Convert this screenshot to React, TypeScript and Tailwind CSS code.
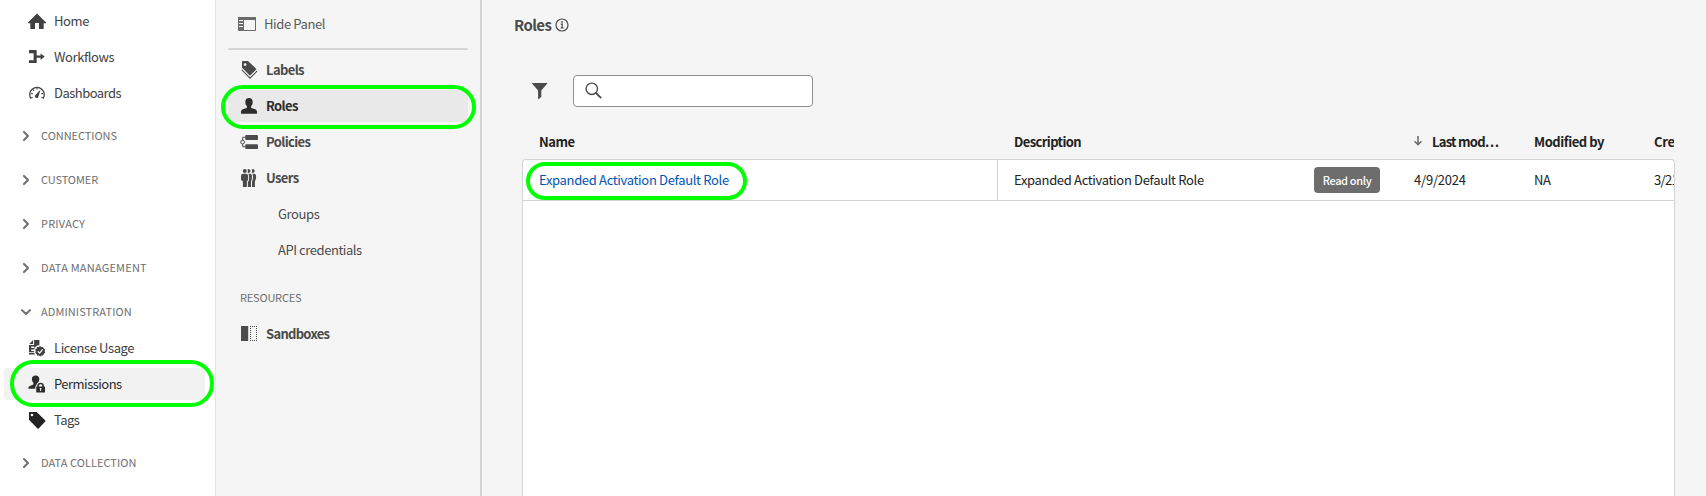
import type { ReactNode } from "react";

type IconProps = { children: ReactNode; className?: string };

function Icon({ children, className = "" }: IconProps) {
  return (
    <svg width="18" height="18" viewBox="0 0 18 18" fill="currentColor" className={`shrink-0 ${className}`}>
      {children}
    </svg>
  );
}

const HomeIcon = () => (
  <Icon>
    <path d="M9 1.6 17.8 10.2a.6.6 0 0 1-.4 1.1H15.7V16.4a.6.6 0 0 1-.6.6H11V11.4a.4.4 0 0 0-.4-.4H7.4a.4.4 0 0 0-.4.4V17H2.9a.6.6 0 0 1-.6-.6V11.3H.6a.6.6 0 0 1-.4-1.1Z" />
  </Icon>
);

const WorkflowsIcon = () => (
  <Icon>
    <path d="M1 2.2a.3.3 0 0 1 .3-.3H8a.7.7 0 0 1 .7.7V7.4H12.6V5.4L16.7 8.6 12.6 12V9.8H8.7v4.6a.7.7 0 0 1-.7.7H1.3a.3.3 0 0 1-.3-.3V12.2h4.6V5.2H1Z" />
  </Icon>
);

const DashboardsIcon = () => (
  <Icon>
    <path d="M2.9 14.7A7.3 7.3 0 1 1 15.1 14.7" fill="none" stroke="currentColor" strokeWidth="1.3" />
    <path d="M12.6 5.6 10.4 12.6a1.7 1.7 0 1 1-2.9-1.5Z" />
    <path d="M3.2 9.6h1.6M5 5.6l1.1 1M9 3.9v1.5M13.3 9.6h1.6M3.2 13.9l1.4-.7M14.8 13.9l-1.4-.7" fill="none" stroke="currentColor" strokeWidth="1.1" />
  </Icon>
);

const LicenseIcon = () => (
  <Icon>
    <path d="M1.3 4.9 5.1 1V4.9ZM6.1 1H11.4V6.1A6 6 0 0 0 7 8.6H6.1V5.9H6.1Z" />
    <path d="M1 5.9H7V7.6H3.2V8.9H6.8L6.2 10.4H3.2V11.9H6V13.2H1Z" />
    <path d="M1 14.1H6.3L6.8 15.4H1Z" />
    <path
      fillRule="evenodd"
      d="M12 7.1 13.4 8.1 15.1 8 15.7 9.6 17.1 10.5 16.7 12.1 17.2 13.8 15.8 14.8 15.2 16.4H13.5L12.2 17.5 10.8 16.5 9.1 16.4 8.6 14.9 7.2 13.8 7.7 12.2 7.2 10.5 8.6 9.6 9.1 8 10.8 8.1ZM11.7 14.9 15.1 10.8 14.2 10.1 11.6 13.3 10.2 11.9 9.4 12.7Z"
    />
  </Icon>
);

const PermissionsIcon = () => (
  <Icon>
    <path d="M7.6.6C10 .6 11.3 2 11.3 4.1 11.3 5.8 10.6 7 9.8 7.8 8.9 8.4 8.4 9.4 8.3 10.5 7.6 10.9 7.3 11.3 7.3 12V13.7H.4V12.7C.4 11.5 1.9 10.6 4.9 9.7c.4-.1.5-.4.5-.8V7.8C4.5 7 3.9 5.8 3.9 4.1 3.9 2 5.2.6 7.6.6Z" />
    <path
      fillRule="evenodd"
      d="M9.3 11.5V10.8C9.3 8.9 10.7 7.7 12.6 7.7S15.9 8.9 15.9 10.8V11.5H16.6a.4.4 0 0 1 .4.4V17.2a.4.4 0 0 1-.4.4H8.6a.4.4 0 0 1-.4-.4V11.9a.4.4 0 0 1 .4-.4ZM10.9 11.5h3.4V10.8C14.3 9.8 13.6 9.2 12.6 9.2S10.9 9.8 10.9 10.8ZM13.1 15.9V14.5A.9.9 0 1 0 12.1 14.5V15.9Z"
    />
  </Icon>
);

const TagIcon = () => (
  <Icon className="text-[#222]">
    <path
      fillRule="evenodd"
      d="M1 1.6A.6.6 0 0 1 1.6 1H8.7L17.3 9.5a.8.8 0 0 1 0 1.1L10.6 17.4a.8.8 0 0 1-1.1 0L1 8.8ZM4 5.3A1.3 1.3 0 1 0 4 2.7 1.3 1.3 0 0 0 4 5.3Z"
    />
  </Icon>
);

const LabelsIcon = () => (
  <Icon>
    <path
      fillRule="evenodd"
      d="M2 .6A.6.6 0 0 1 2.6 0H8L16.1 7.7a.6.6 0 0 1 0 .9L10.4 14.2a.6.6 0 0 1-.9 0L2 6.6ZM5.1 5A1.4 1.4 0 1 0 5.1 2.2 1.4 1.4 0 0 0 5.1 5Z"
    />
    <path d="M2.3 8.6V9.3L10 17.2 16.6 10.6V10" fill="none" stroke="currentColor" strokeWidth="1.1" />
  </Icon>
);

const UserIcon = () => (
  <Icon>
    <path d="M9 1C11.3 1 12.7 2.5 12.7 4.9 12.7 6.8 12 8.1 11.1 9.1V10.4c0 .5.2.8.7.9C15.2 12 17 13 17 14.7V16.4a.4.4 0 0 1-.4.4H1.4a.4.4 0 0 1-.4-.4V14.7C1 13 2.8 12 6.2 11.3c.5-.1.7-.4.7-.9V9.1C6 8.1 5.3 6.8 5.3 4.9 5.3 2.5 6.7 1 9 1Z" />
  </Icon>
);

const PoliciesIcon = () => (
  <Icon>
    <rect x="5.2" y="2" width="12.8" height="4.9" rx="1" />
    <rect x="5.2" y="11.2" width="12.8" height="4.9" rx="1" />
    <path d="M5.2 4.3H2.7V7.2M2.7 11V13.7H5.2" fill="none" stroke="currentColor" />
    <circle cx="2.6" cy="9.1" r="1.9" fill="none" stroke="currentColor" />
  </Icon>
);

const UsersIcon = () => (
  <Icon>
    <circle cx="4.8" cy="2" r="2" />
    <path d="M7.4 3.5A2.6 2.6 0 0 0 7.4.5 1.9 1.9 0 1 1 7.4 3.5ZM11.6 3.5A2.6 2.6 0 0 0 11.6.5 1.9 1.9 0 1 1 11.6 3.5Z" />
    <path d="M3 4.8H6.2A1.8 1.8 0 0 1 8 6.6V11.3L6.9 12.2V17.4a.5.5 0 0 1-.5.5H3.4a.5.5 0 0 1-.5-.5V12.2L1 11V6.8A2 2 0 0 1 3 4.8Z" />
    <path d="M8.2 4.8H10.2C11.3 5 12 6 12 7.2 12 9.4 11.8 10.8 11 12.2V17.4a.5.5 0 0 1-.5.5H7.9V12.8L8.9 11.8V6.6A2.8 2.8 0 0 0 8.2 4.8ZM12.2 4.8H14.2C15.4 5 16.1 6 16.1 7.2 16.1 9.4 15.8 10.8 14.9 12.2V17.4a.5.5 0 0 1-.5.5H12V12.8C12.8 11 13 9.2 13 7.2A3.6 3.6 0 0 0 12.2 4.8Z" />
  </Icon>
);

const SandboxesIcon = () => (
  <Icon>
    <rect x="1" y="1" width="7.2" height="15" />
    <path d="M10 1H11M12 1H13M14 1H15M16 1H17M10 15H11M12 15H13M14 15H15M16 15H17" stroke="currentColor" strokeWidth="1" transform="translate(0 .5)" />
    <path d="M10.5 3v12M16.5 3v12" fill="none" stroke="currentColor" strokeDasharray="1 1" />
  </Icon>
);

const PanelIcon = () => (
  <Icon className="text-[#6a6a6a]">
    <path
      fillRule="evenodd"
      d="M.7 2H17.3a.7.7 0 0 1 .7.7V15.3a.7.7 0 0 1-.7.7H.7a.7.7 0 0 1-.7-.7V2.7A.7.7 0 0 1 .7 2ZM6 5V15H17V5ZM1 5V6H5V5ZM1 8V9H5V8ZM1 11V12H5V11Z"
    />
  </Icon>
);

const Chevron = ({ open = false }: { open?: boolean }) => (
  <svg width="10" height="10" viewBox="0 0 10 10" fill="none" stroke="#6e6e6e" strokeWidth="2" strokeLinecap="round" strokeLinejoin="round" className="shrink-0">
    {open ? <path d="M1 3.1 5 7 9 3.1" /> : <path d="M3 1 7 5 3 9" />}
  </svg>
);

type ItemProps = { icon: ReactNode; label: string; active?: boolean; tracking?: string };

function NavItem({ icon, label, active = false, tracking = "tracking-[-0.4px]" }: ItemProps) {
  return (
    <div className="flex h-9 items-center pr-[10px] pl-1">
      <div className={`relative flex h-8 w-full items-center rounded pl-6 ${active ? "bg-[#f2f2f2] text-[#2c2c2c]" : "text-[#414141]"}`}>
        {icon}
        <span className={`ml-2 ${tracking}`}>{label}</span>
        {active && <div className="absolute -top-2 left-[6px] h-[47px] w-[204px] rounded-[23px] border-4 border-[#00ff00]" />}
      </div>
    </div>
  );
}

type SectionProps = { label: string; open?: boolean; className?: string; tracking?: string };

function Section({ label, open = false, className = "", tracking = "tracking-[0.05px]" }: SectionProps) {
  return (
    <div className={`flex h-9 items-center pl-[21px] ${className}`}>
      <Chevron open={open} />
      <span className={`mb-[2px] ml-[10px] text-[11px] text-[#6e6e6e] ${tracking}`}>{label}</span>
    </div>
  );
}

function PanelItem({ icon, label, active = false, tracking = "tracking-[-0.62px]" }: ItemProps) {
  return (
    <div className="flex h-9 items-center px-3">
      <div className={`relative flex h-8 w-full items-center rounded pl-3 font-bold ${active ? "bg-[#e9e9e9] text-[#2c2c2c]" : "text-[#4b4b4b]"}`}>
        {icon}
        <span className={`ml-2 ${tracking}`}>{label}</span>
        {active && <div className="absolute -top-[5px] -left-[7px] h-[44px] w-[255px] rounded-[22px] border-4 border-[#00ff00]" />}
      </div>
    </div>
  );
}

function SideNav() {
  return (
    <nav className="flex h-full w-[216px] shrink-0 flex-col border-r border-[#e4e4e4] bg-white pt-[3px]">
      <NavItem icon={<HomeIcon />} label="Home" />
      <NavItem icon={<WorkflowsIcon />} label="Workflows" />
      <NavItem icon={<DashboardsIcon />} label="Dashboards" tracking="tracking-[-0.52px]" />
      <div className="mt-[7px] flex flex-col gap-2">
        <Section label="CONNECTIONS" tracking="tracking-[-0.04px]" />
        <Section label="CUSTOMER" tracking="tracking-[-0.1px]" />
        <Section label="PRIVACY" tracking="tracking-[0.2px]" />
        <Section label="DATA MANAGEMENT" tracking="tracking-[0.2px]" />
        <Section label="ADMINISTRATION" open tracking="tracking-[0.1px]" />
      </div>
      <NavItem icon={<LicenseIcon />} label="License Usage" />
      <NavItem icon={<PermissionsIcon />} label="Permissions" active tracking="tracking-[-0.52px]" />
      <NavItem icon={<TagIcon />} label="Tags" tracking="tracking-[-0.55px]" />
      <Section label="DATA COLLECTION" className="mt-[7px]" tracking="tracking-[0.05px]" />
    </nav>
  );
}

function SidePanel() {
  return (
    <aside className="flex h-full w-[266px] shrink-0 flex-col border-r-2 border-[#d3d3d3] text-[#4b4b4b]">
      <div className="flex h-12 items-center pl-[22px]">
        <PanelIcon />
        <span className="ml-2 tracking-[-0.38px] text-[#5a5a5a]">Hide Panel</span>
      </div>
      <div className="mx-3 mb-1 h-[2px] shrink-0 rounded bg-[#d5d5d5]" />
      <div className="-mt-[2px] flex flex-col">
        <PanelItem icon={<LabelsIcon />} label="Labels" />
        <PanelItem icon={<UserIcon />} label="Roles" active />
        <PanelItem icon={<PoliciesIcon />} label="Policies" />
        <PanelItem icon={<UsersIcon />} label="Users" />
        <div className="flex h-9 items-center pl-[62px] tracking-[-0.4px]">Groups</div>
        <div className="flex h-9 items-center pl-[62px] tracking-[-0.44px]">API credentials</div>
      </div>
      <div className="mt-3 flex h-[34px] items-center pl-6 text-[11px] tracking-[-0.2px] text-[#6e6e6e]">RESOURCES</div>
      <div className="mt-[2px]">
        <PanelItem icon={<SandboxesIcon />} label="Sandboxes" tracking="tracking-[-0.7px]" />
      </div>
    </aside>
  );
}

function RolesTable() {
  return (
    <div className="ml-10 flex w-[1153px] grow flex-col overflow-hidden text-[#222]">
      <div className="grid h-[33px] shrink-0 grid-cols-[475px_400px_120px_120px_37px] items-center pb-[2px] font-bold">
        <span className="pl-[17px] tracking-[-0.5px]">Name</span>
        <span className="pl-[17px] tracking-[-0.6px]">Description</span>
        <span className="flex items-center pl-[17px] tracking-[-0.75px]">
          <svg width="8" height="10" viewBox="0 0 8 10" fill="none" stroke="#6e6e6e" strokeWidth="1.6" className="-mt-[1px] mr-[10px]">
            <path d="M4 0V8.4M.6 5.2 4 8.6 7.4 5.2" />
          </svg>
          Last mod…
        </span>
        <span className="pl-[17px] tracking-[-0.45px]">Modified by</span>
        <span className="overflow-hidden pl-[17px] tracking-[-0.3px] whitespace-nowrap">Created on</span>
      </div>
      <div className="grow overflow-hidden rounded-t border border-b-0 border-[#d3d3d3] bg-white">
        <div className="grid h-[41px] grid-cols-[475px_400px_120px_120px_36px] items-center border-b border-[#d3d3d3] tracking-[-0.33px]">
          <div className="relative flex h-full items-center border-r border-[#d3d3d3] pl-4 text-[#0054b6]">
            Expanded Activation Default Role
            <div className="absolute top-[2px] left-[3px] h-[38px] w-[221px] rounded-[19px] border-4 border-[#00ff00]" />
          </div>
          <div className="flex items-center justify-between pr-[18px] pl-4">
            <span>Expanded Activation Default Role</span>
            <span className="flex h-[26px] w-[66px] items-center justify-center rounded bg-[#6d6d6d] pb-px text-[11px] font-medium tracking-[-0.35px] text-white">Read only</span>
          </div>
          <span className="pl-4 tracking-[-0.2px]">4/9/2024</span>
          <span className="pl-4">NA</span>
          <span className="overflow-hidden pl-4 tracking-[-0.7px] whitespace-nowrap">3/21/2024</span>
        </div>
      </div>
    </div>
  );
}

export default function App() {
  return (
    <div className="flex h-[496px] w-[1706px] overflow-hidden bg-[#f5f5f5] font-['Noto_Sans_CJK_SC','Noto_Sans',sans-serif] text-[13px] leading-[18px] whitespace-nowrap">
      <SideNav />
      <SidePanel />
      <main className="flex min-w-0 grow flex-col">
        <div className="flex h-[50px] shrink-0 items-center gap-1 pl-8 text-[#4b4b4b]">
          <h1 className="text-[15px] font-bold tracking-[-0.6px]">Roles</h1>
          <svg width="14" height="14" viewBox="0 0 14 14" fill="none" stroke="currentColor" strokeWidth="1.2">
            <circle cx="7" cy="7" r="6" />
            <path d="M5.7 6.2H7.2V9.7M5.6 9.9H8.6" />
            <circle cx="7" cy="4" r=".9" fill="currentColor" stroke="none" />
          </svg>
        </div>
        <div className="mt-[25px] flex h-8 shrink-0 items-center pl-[49px]">
          <svg width="18" height="18" viewBox="0 0 18 18" fill="#4b4b4b">
            <path d="M1.5 1H15.8a.4.4 0 0 1 .3.7L10.3 8.4V14.8L7.6 17.3a.3.3 0 0 1-.5-.2V8.4L1.2 1.7A.4.4 0 0 1 1.5 1Z" />
          </svg>
          <div className="ml-[24px] flex h-8 w-60 items-center rounded border border-[#909090] bg-white pl-[11px]">
            <svg width="18" height="18" viewBox="0 0 18 18" fill="none" stroke="#4b4b4b" strokeWidth="1.4">
              <circle cx="6.8" cy="6.8" r="5.7" />
              <path d="M11 11 15.7 15.6" strokeWidth="1.8" strokeLinecap="round" />
            </svg>
          </div>
        </div>
        <div className="mt-[19px] flex grow flex-col">
          <RolesTable />
        </div>
      </main>
    </div>
  );
}
